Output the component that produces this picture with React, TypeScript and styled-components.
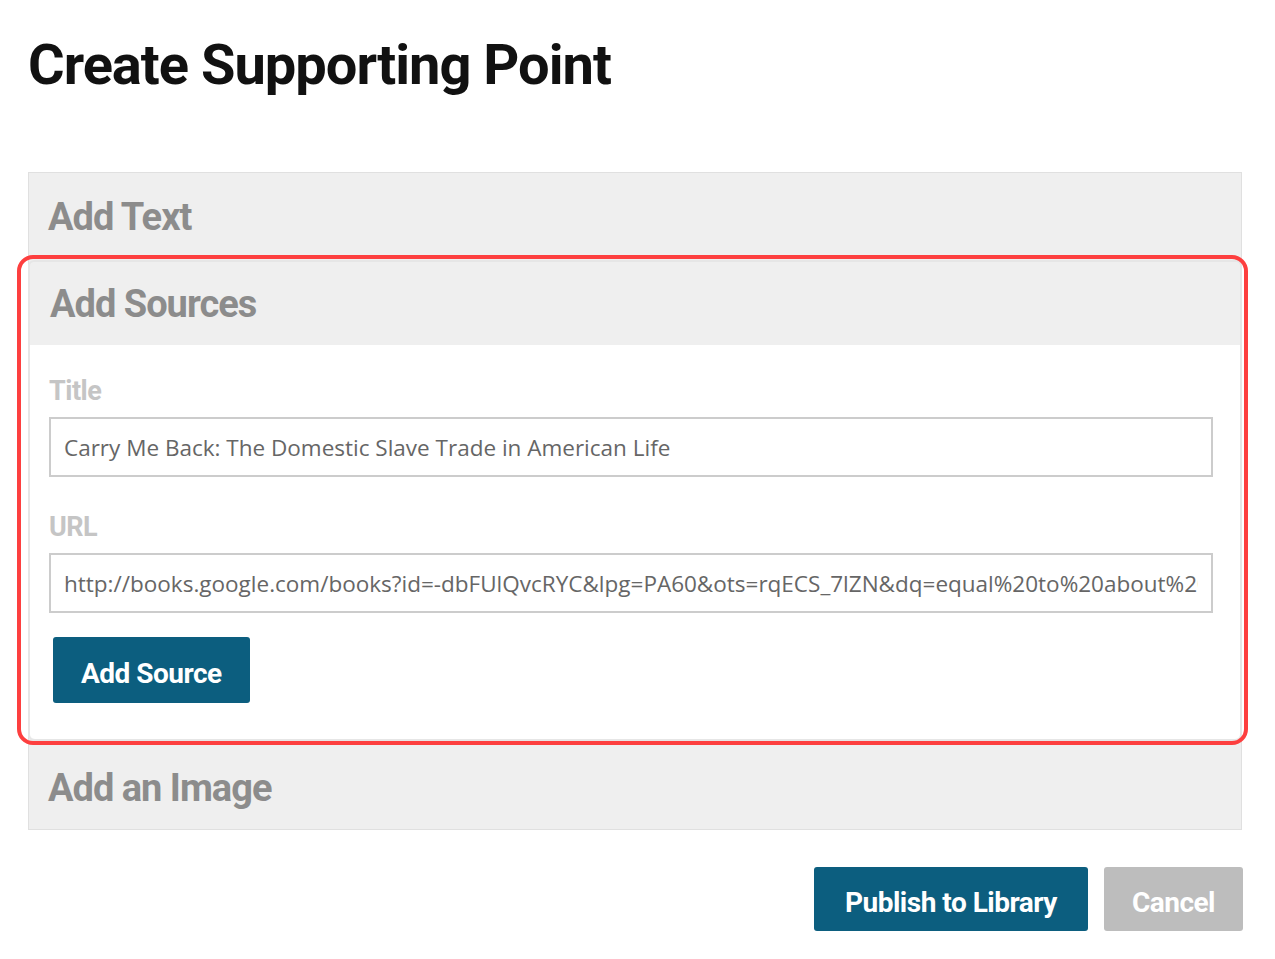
import React from 'react';
import styled, { createGlobalStyle } from 'styled-components';

const GlobalStyle = createGlobalStyle`
  body {
    margin: 0;
    background: #fff;
    font-family: Roboto, 'Liberation Sans', sans-serif;
  }
`;

const Page = styled.div`
  width: 1214px;
  padding: 25px 0 28px 28px;
`;

const Heading = styled.h1`
  margin: 0;
  font-size: 56px;
  line-height: 80px;
  font-weight: 700;
  letter-spacing: -1px;
  color: #111;
`;

const Accordion = styled.div`
  margin-top: 67px;
  border: 1px solid #e0e0e0;
  background: #efefef;
`;

const Section = styled.div<{ open?: boolean }>`
  position: relative;
  margin: 0 -1px;
  border: ${(p) => (p.open ? '2px solid #e6e6e6' : '0')};
  border-radius: ${(p) => (p.open ? '6px' : '0')};
`;

const Highlight = styled.div`
  position: absolute;
  left: -13px;
  right: -8px;
  top: -7px;
  bottom: -6px;
  border: 4px solid #fd3f3f;
  border-radius: 16px;
  pointer-events: none;
`;

const SectionHeader = styled.div<{ open?: boolean; last?: boolean }>`
  box-sizing: border-box;
  height: ${(p) => (p.open ? '83px' : p.last ? '88px' : '87px')};
  padding: ${(p) => (p.last ? '6px' : '0')} 0 0 20px;
  display: flex;
  align-items: center;
  font-size: 38px;
  font-weight: 700;
  letter-spacing: -1px;
  color: #8c8c8c;
`;

const SectionBody = styled.div`
  background: #fff;
  padding: 28px 27px 36px 19px;
  border-radius: 0 0 5px 5px;
`;

const Field = styled.div`
  & + & {
    margin-top: 32px;
  }
`;

const Label = styled.label`
  display: block;
  font-size: 27px;
  line-height: 36px;
  font-weight: 700;
  letter-spacing: -0.5px;
  color: #c5c5c5;
  margin-bottom: 8px;
`;

const Input = styled.input`
  display: block;
  box-sizing: border-box;
  width: 100%;
  height: 60px;
  margin: 0;
  padding: 0 13px;
  border: 2px solid #cccccc;
  font-family: 'Open Sans', sans-serif;
  font-size: 22.5px;
  color: #666;
  background: #fff;
  outline: none;
`;

const Button = styled.button<{ muted?: boolean }>`
  box-sizing: border-box;
  height: 64px;
  padding: 6px ${(p) => (p.muted ? '28px' : '31px')} 0;
  border: 0;
  border-radius: 3px;
  background: ${(p) => (p.muted ? '#bdbdbd' : '#0c5e7f')};
  color: #fff;
  font-family: inherit;
  font-size: 28px;
  font-weight: 700;
  letter-spacing: -0.5px;
  cursor: pointer;
`;

const AddButton = styled(Button)`
  display: block;
  height: 66px;
  margin: 24px 0 0 4px;
  padding: 6px 28px 0;
`;

const Footer = styled.div`
  display: flex;
  justify-content: flex-end;
  gap: 16px;
  margin-top: 37px;
  margin-right: -1px;
`;

export default function App() {
  return (
    <>
      <GlobalStyle />
      <Page>
        <Heading>Create Supporting Point</Heading>
        <Accordion>
          <Section>
            <SectionHeader>Add Text</SectionHeader>
          </Section>
          <Section open>
            <Highlight />
            <SectionHeader open>Add Sources</SectionHeader>
            <SectionBody>
              <Field>
                <Label>Title</Label>
                <Input defaultValue="Carry Me Back: The Domestic Slave Trade in American Life" />
              </Field>
              <Field>
                <Label>URL</Label>
                <Input defaultValue="http://books.google.com/books?id=-dbFUlQvcRYC&lpg=PA60&ots=rqECS_7lZN&dq=equal%20to%20about%20one%20thousand" />
              </Field>
              <AddButton>Add Source</AddButton>
            </SectionBody>
          </Section>
          <Section>
            <SectionHeader last>Add an Image</SectionHeader>
          </Section>
        </Accordion>
        <Footer>
          <Button>Publish to Library</Button>
          <Button muted>Cancel</Button>
        </Footer>
      </Page>
    </>
  );
}
